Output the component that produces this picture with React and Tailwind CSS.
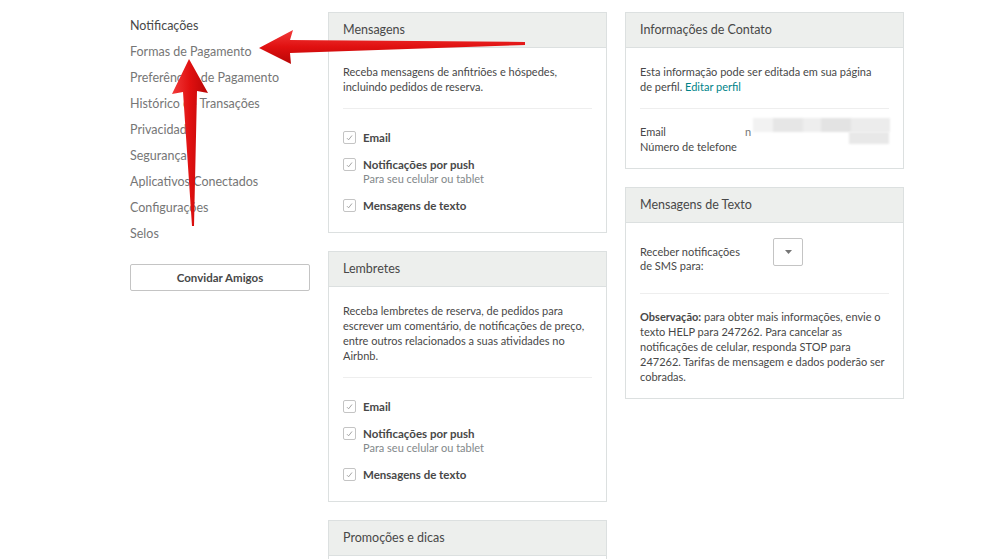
import React from "react";

const font = { fontFamily: "Lato, 'Noto Sans', sans-serif" };

function Check() {
  return (
    <span className="mt-[1px] flex h-[13px] w-[13px] shrink-0 items-center justify-center rounded-[2px] border border-[#c4c4c4] bg-white">
      <svg width="9" height="9" viewBox="0 0 9 9">
        <path d="M2 5.2 L3.6 6.8 L7 2.5" fill="none" stroke="#9a9a9a" strokeWidth="0.9" />
      </svg>
    </span>
  );
}

function CheckRow({ label, sub }) {
  return (
    <div className="flex items-start gap-[7px]">
      <Check />
      <div>
        <div className="text-[11.5px] leading-[15px] font-bold text-[#484848]">{label}</div>
        {sub && <div className="text-[11px] leading-[14px] text-[#82888a]">{sub}</div>}
      </div>
    </div>
  );
}

function Card({ title, children, className = "" }) {
  return (
    <div className={"border border-[#dce0e0] bg-white " + className}>
      <div className="h-[35px] border-b border-[#dce0e0] bg-[#edefed] px-[14px] flex items-center text-[12.5px] text-[#484848]">
        {title}
      </div>
      {children}
    </div>
  );
}

function Checks() {
  return (
    <div className="flex flex-col gap-[12px] pt-[21px] pb-[19px]">
      <CheckRow label="Email" />
      <CheckRow label="Notificações por push" sub="Para seu celular ou tablet" />
      <CheckRow label="Mensagens de texto" />
    </div>
  );
}

export default function App() {
  const items = [
    "Notificações",
    "Formas de Pagamento",
    "Preferências de Pagamento",
    "Histórico de Transações",
    "Privacidade",
    "Segurança",
    "Aplicativos Conectados",
    "Configurações",
    "Selos",
  ];
  return (
    <div className="relative h-[559px] w-[987px] overflow-hidden bg-white" style={font}>
      <div className="flex gap-[18px] pl-[130px] pt-[12px]">
        {/* Sidebar */}
        <div className="w-[180px] shrink-0 mt-[1px]">
          {items.map((t, i) => (
            <div
              key={t}
              className={
                "h-[26px] leading-[26px] text-[12.5px] " +
                (i === 0 ? "text-[#484848]" : "text-[#767676]")
              }
            >
              {t}
            </div>
          ))}
          <button className="mt-[17px] flex h-[27px] w-[180px] items-center justify-center rounded-[2px] border border-[#c4c4c4] bg-white text-[11.5px] font-bold text-[#484848]">
            Convidar Amigos
          </button>
        </div>

        {/* Middle column */}
        <div className="flex w-[279px] shrink-0 flex-col gap-[18px]">
          <Card title="Mensagens">
            <div className="px-[14px]">
              <div className="border-b border-[#eeeeee] pt-[16px] pb-[14px] text-[11px] leading-[15px] text-[#484848]">
                Receba mensagens de anfitriões e hóspedes,
                <br />
                incluindo pedidos de reserva.
              </div>
              <Checks />
            </div>
          </Card>
          <Card title="Lembretes">
            <div className="px-[14px]">
              <div className="border-b border-[#eeeeee] pt-[16px] pb-[14px] text-[11px] leading-[15px] text-[#484848]">
                Receba lembretes de reserva, de pedidos para
                <br />
                escrever um comentário, de notificações de preço,
                <br />
                entre outros relacionados a suas atividades no
                <br />
                Airbnb.
              </div>
              <Checks />
            </div>
          </Card>
          <Card title="Promoções e dicas" className="h-[60px]" />
        </div>

        {/* Right column */}
        <div className="flex w-[279px] shrink-0 flex-col gap-[18px]">
          <Card title="Informações de Contato">
            <div className="px-[14px]">
              <div className="border-b border-[#eeeeee] pt-[16px] pb-[14px] text-[11px] leading-[15px] text-[#484848]">
                Esta informação pode ser editada em sua página
                <br />
                de perfil. <span className="text-[#008489]">Editar perfil</span>
              </div>
              <div className="flex pt-[15px] pb-[14px] text-[11px] leading-[15px] text-[#484848]">
                <div className="w-[105px] shrink-0">
                  <div>Email</div>
                  <div>Número de telefone</div>
                </div>
                <div className="relative flex-1">
                  <span className="text-[#767676]">n</span>
                  <div className="absolute left-[8px] top-[-6px] flex h-[14px] w-[137px] blur-[1px]">
                    <div className="w-[20px] bg-[#f2f2f2]" />
                    <div className="w-[30px] bg-[#e6e6e6]" />
                    <div className="w-[18px] bg-[#eeeeee]" />
                    <div className="w-[30px] bg-[#e3e3e3]" />
                    <div className="w-[39px] bg-[#ececec]" />
                  </div>
                  <div className="absolute left-[104px] top-[8px] h-[12px] w-[40px] bg-[#e8e8e8] blur-[1px]" />
                </div>
              </div>
            </div>
          </Card>
          <Card title="Mensagens de Texto">
            <div className="px-[14px]">
              <div className="flex items-start border-b border-[#eeeeee] pt-[22px] pb-[20px]">
                <div className="w-[133px] text-[11px] leading-[14px] text-[#484848]">
                  Receber notificações
                  <br />
                  de SMS para:
                </div>
                <div className="-mt-[7px] flex h-[28px] w-[30px] items-center justify-center rounded-[2px] border border-[#c4c4c4] bg-white">
                  <svg width="7" height="4" viewBox="0 0 7 4">
                    <path d="M0 0 L7 0 L3.5 4 Z" fill="#767676" />
                  </svg>
                </div>
              </div>
              <div className="pt-[15px] pb-[14px] text-[11px] leading-[15px] text-[#484848]">
                <span className="font-bold">Observação:</span> para obter mais informações, envie o
                <br />
                texto HELP para 247262. Para cancelar as
                <br />
                notificações de celular, responda STOP para
                <br />
                247262. Tarifas de mensagem e dados poderão ser
                <br />
                cobradas.
              </div>
            </div>
          </Card>
        </div>
      </div>

      {/* Annotation arrows */}
      <svg className="pointer-events-none absolute left-0 top-0" width="987" height="559" viewBox="0 0 987 559">
        <defs>
          <linearGradient id="rh" x1="0" y1="0" x2="0" y2="1">
            <stop offset="0" stopColor="#f23a3a" />
            <stop offset="0.5" stopColor="#e01010" />
            <stop offset="1" stopColor="#b80606" />
          </linearGradient>
          <linearGradient id="rv" x1="0" y1="0" x2="1" y2="0">
            <stop offset="0" stopColor="#f23a3a" />
            <stop offset="0.5" stopColor="#e01010" />
            <stop offset="1" stopColor="#b80606" />
          </linearGradient>
        </defs>
        <polygon
          points="259,48 293,30 290,40 525,42 525,45 290,53 291,64"
          fill="url(#rh)"
        />
        <polygon
          points="189,59 208,93 197,91 194,226 192,226 183,92 172,94"
          fill="url(#rv)"
        />
      </svg>
    </div>
  );
}
